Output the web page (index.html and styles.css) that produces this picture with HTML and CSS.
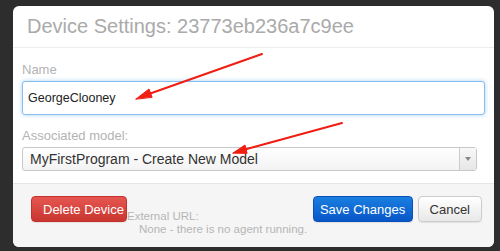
FILE: index.html
```html
<!DOCTYPE html>
<html lang="en">
<head>
    <meta charset="UTF-8">
    <meta name="viewport" content="width=device-width, initial-scale=1.0">
    <title>Device Settings</title>
    <link rel="stylesheet" href="styles.css">
</head>
<body>
    <div class="modal">
        <header class="modal-header">
            <h3>Device Settings: 23773eb236a7c9ee</h3>
        </header>

        <section class="modal-body">
            <label for="deviceName">Name</label>
            <input id="deviceName" class="name-input" type="text" value="GeorgeClooney">

            <label for="deviceModel">Associated model:</label>
            <div class="select">
                <span class="select-value">MyFirstProgram - Create New Model</span>
                <span class="select-arrow"></span>
            </div>
        </section>

        <footer class="modal-footer">
            <button class="btn btn-danger">Delete Device</button>
            <div class="agent-url">
                <span>External URL:</span>
                <span class="agent-none">None - there is no agent running.</span>
            </div>
            <button class="btn btn-primary">Save Changes</button>
            <button class="btn">Cancel</button>
        </footer>
    </div>

    <!-- red annotation arrows over the screenshot -->
    <svg class="arrows" width="500" height="251" viewBox="0 0 500 251">
        <g stroke="#f01d12" stroke-width="2" fill="#f01d12" stroke-linecap="round">
            <line x1="262" y1="54" x2="146" y2="95"/>
            <polygon points="136,99 149,89 152,97" stroke-width="1"/>
            <line x1="342" y1="123" x2="243" y2="150"/>
            <polygon points="233,153 245,145 247,153" stroke-width="1"/>
        </g>
    </svg>
</body>
</html>
```

FILE: styles.css
```css
* {
    margin: 0;
    padding: 0;
    box-sizing: border-box;
}

body {
    font-family: "Liberation Sans", Arial, sans-serif;
    background-color: #2d2d2d;
    padding: 6px 6px 0 13px;
    height: 251px;
    overflow: hidden;
    position: relative;
}

.modal {
    width: 481px;
    background-color: #fff;
    border-radius: 6px;
    overflow: hidden;
}

.modal-header {
    height: 42px;
    padding: 0 14px;
    border-bottom: 1px solid #eee;
    display: flex;
    align-items: center;
}

.modal-header h3 {
    font-size: 20px;
    font-weight: normal;
    color: #aaa;
}

.modal-body {
    padding: 14px 9px 12px 9px;
    display: flex;
    flex-direction: column;
}

.modal-body label {
    font-size: 13px;
    color: #b3b3b3;
    line-height: 16px;
    margin-bottom: 3px;
}

.name-input {
    height: 34px;
    border: 1px solid #87bdf0;
    border-radius: 3px;
    box-shadow: 0 0 4px rgba(82, 168, 236, 0.5);
    padding: 0 5px;
    font-family: inherit;
    font-size: 12.5px;
    color: #222;
    outline: none;
    margin-bottom: 13px;
}

.select {
    width: 455px;
    height: 24px;
    border: 1px solid #c8c8c8;
    border-radius: 3px;
    background: linear-gradient(#fff, #f3f3f3);
    display: flex;
    align-items: center;
}

.select-value {
    flex: 1;
    padding-left: 7px;
    font-size: 14px;
    color: #333;
}

.select-arrow {
    width: 17px;
    height: 100%;
    border-left: 1px solid #ccc;
    background: linear-gradient(#f8f8f8, #e6e6e6);
    position: relative;
}

.select-arrow::after {
    content: "";
    position: absolute;
    left: 5px;
    top: 9px;
    border-left: 3px solid transparent;
    border-right: 3px solid transparent;
    border-top: 4px solid #888;
}

.modal-footer {
    height: 64px;
    background-color: #f5f5f5;
    border-top: 1px solid #e5e5e5;
    padding: 12px 12px 0 18px;
    display: flex;
    align-items: flex-start;
}

.btn {
    flex-shrink: 0;
    height: 26px;
    padding: 0 11px;
    border: 1px solid #ccc;
    border-radius: 4px;
    font-family: inherit;
    font-size: 13px;
    white-space: nowrap;
    color: #333;
    background: linear-gradient(#fff, #e8e8e8);
    box-shadow: 0 1px 1px rgba(0, 0, 0, 0.08);
}

.btn-danger {
    width: 96px;
    color: #fff;
    border-color: #c5312d;
    background: linear-gradient(#e65650, #c93630);
}

.btn-primary {
    width: 100px;
    padding: 0;
    color: #fff;
    border-color: #0752b8;
    background: linear-gradient(#1a7fe0, #0856c8);
    margin-left: auto;
    margin-right: 5px;
}

.agent-url {
    display: flex;
    flex-direction: column;
    font-size: 11.5px;
    line-height: 13px;
    color: #b5b5b5;
    white-space: nowrap;
    padding-top: 14px;
}

.agent-none {
    padding-left: 12px;
}

.arrows {
    position: absolute;
    left: 0;
    top: 0;
}
```
